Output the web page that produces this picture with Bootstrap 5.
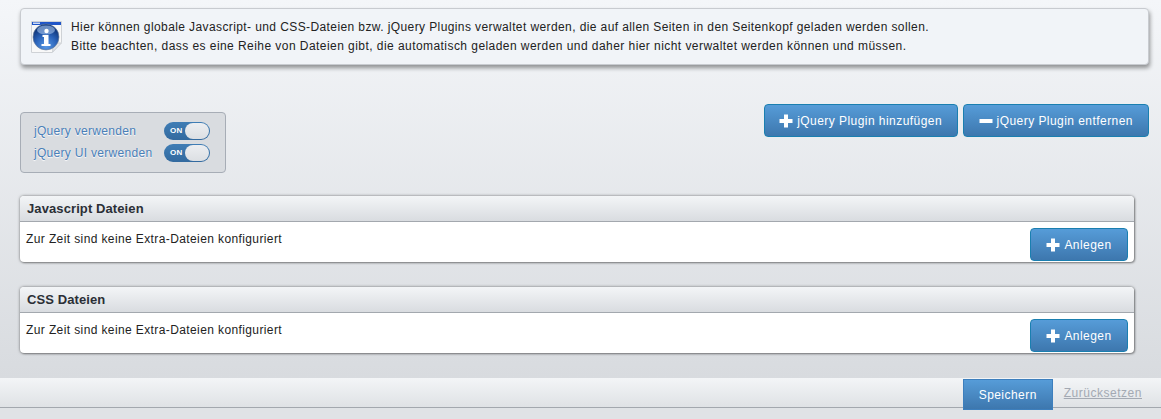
<!DOCTYPE html>
<html lang="de">
<head>
  <meta charset="UTF-8" />
  <title>Extra-Dateien</title>
  <link href="https://cdn.jsdelivr.net/npm/bootstrap@5.3.2/dist/css/bootstrap.min.css" rel="stylesheet" />
  <style>
    html, body { height: 100%; }
    body {
      margin: 0;
      height: 419px;
      overflow: hidden;
      font-family: "Liberation Sans", Arial, sans-serif;
      font-size: 12px;
      color: #222;
      background: linear-gradient(#f4f6f9, #d8dbdf) 0 0 / 100% 378px no-repeat, #e0e3e6;
    }
    .page-wrap { padding: 8px 12px 0 20px; }
    .info-box {
      height: 57px;
      gap: 9px;
      padding: 0 12px 0 10px;
      background: #f1f4f8;
      border: 1px solid #c8cbd0;
      border-radius: 4px;
      box-shadow: 1px 3px 4px rgba(0,0,0,.4);
      line-height: 19px;
    }
    .info-pic { margin-top: 1px; }
    .info-first { letter-spacing: .4px; }
    .info-second { letter-spacing: .445px; }
    .tools-row { margin-top: 39px; height: 69px; }
    .toggle-box {
      margin-top: 8px;
      width: 206px;
      height: 61px;
      padding: 7px 15px 0 13px;
      background: #d9dce0;
      border: 1px solid #a7adb6;
      border-radius: 4px;
      color: #4a7fb8;
      letter-spacing: .3px;
      text-shadow: 0 1px 1px #fff;
    }
    .toggle-line { height: 22px; }
    .on-switch {
      width: 46px;
      height: 18px;
      padding-left: 6px;
      background: linear-gradient(#3f7db5, #336a9f);
      border-radius: 9px;
      font-size: 8px;
      font-weight: bold;
      letter-spacing: .04em;
      color: #fff;
      text-shadow: none;
    }
    .on-knob {
      right: 1px;
      top: 1px;
      width: 24px;
      height: 16px;
      background: linear-gradient(#eceef1, #dcdfe3);
      border-radius: 8px;
    }
    .btn-pair { gap: 5px; }
    .blue-btn {
      height: 33px;
      gap: 4px;
      padding: 0 14.5px;
      font-size: 12px;
      letter-spacing: .45px;
      color: #fff;
      background: linear-gradient(#569cd8, #3d77ae);
      border: 1px solid #1a7fb0;
      border-radius: 4px;
    }
    .blue-btn:hover { color: #fff; background: linear-gradient(#569cd8, #3d77ae); border-color: #1a7fb0; }
    .blue-btn svg { flex: none; }
    .blue-btn.minus-btn { padding: 0 15px; }
    .file-panel {
      width: 1114px;
      height: 66px;
      margin-top: 25px;
      background: #fff;
      border: 0;
      border-radius: 4px;
      box-shadow: 0 0 3px rgba(0,0,0,.5), 1px 1px 2px rgba(0,0,0,.3);
      overflow: hidden;
    }
    .file-panel.first-panel { margin-top: 23px; }
    .file-panel .card-header {
      flex: none;
      height: 26px;
      padding: 0 7px;
      background: linear-gradient(#f3f5f7, #d9dce0);
      border-bottom: 1px solid #a3a8ae;
      border-radius: 0;
      font-size: 13px;
      font-weight: bold;
      letter-spacing: .1px;
      line-height: 26px;
      color: #2b2f36;
    }
    .file-panel .card-body {
      padding: 6px 6px 0;
      letter-spacing: .39px;
      line-height: 22px;
      color: #222;
    }
    .panel-add { width: 98px; padding: 0; justify-content: center; }
    .foot-bar {
      margin-top: 25px;
      height: 30px;
      padding-right: 19px;
      background: linear-gradient(#f3f5f7, #dfe2e5);
      border-bottom: 1px solid #a3a8ae;
    }
    .save-btn {
      height: 31px;
      width: 90px;
      margin-top: 1px;
      margin-right: 11px;
      padding: 0;
      border-radius: 0;
      justify-content: center;
      border-color: #3d7fbd;
    }
    .save-btn:hover { border-color: #3d7fbd; }
    .reset-link {
      color: #a3a9b3;
      letter-spacing: .52px;
    }
    .reset-link:hover { color: #a3a9b3; }
  </style>
</head>
<body>
  <div class="page-wrap">
    <div class="info-box d-flex align-items-center">
      <svg width="31" height="32" viewBox="0 0 31 32" class="info-pic flex-shrink-0">
        <defs>
          <radialGradient id="infoBall" cx="50%" cy="85%" r="70%">
            <stop offset="0" stop-color="#5a9ae6" />
            <stop offset=".6" stop-color="#2a62b8" />
            <stop offset="1" stop-color="#123a80" />
          </radialGradient>
        </defs>
        <path d="M.5.5h30v21l-9 10H.5z" fill="#f8f8f8" stroke="#cfd2d6" />
        <path d="M21.500 31l1-9h8z" fill="#e4e5e7" stroke="#cfd2d6" />
        <rect x="1" y="1" width="29" height="3" fill="#1f55c8" />
        <rect x="2" y="1.500" width="7" height="1.500" fill="#cfdcf5" />
        <circle cx="15" cy="16" r="13" fill="url(#infoBall)" stroke="#6f7f95" stroke-width=".6" />
        <ellipse cx="15" cy="9" rx="9" ry="4.500" fill="#a9c6ee" opacity=".6" />
        <circle cx="15.500" cy="10" r="2.200" fill="#fff" />
        <path d="M11.500 14h6v9h2v2h-9v-2h2.500v-7h-1.500z" fill="#fff" />
      </svg>
      <div>
        <div class="info-first">Hier können globale Javascript- und CSS-Dateien bzw. jQuery Plugins verwaltet werden, die auf allen Seiten in den Seitenkopf geladen werden sollen.</div>
        <div class="info-second">Bitte beachten, dass es eine Reihe von Dateien gibt, die automatisch geladen werden und daher hier nicht verwaltet werden können und müssen.</div>
      </div>
    </div>

    <div class="tools-row d-flex justify-content-between align-items-start">
      <div class="toggle-box">
        <div class="toggle-line d-flex justify-content-between align-items-center">
          <span>jQuery verwenden</span>
          <span class="on-switch d-flex align-items-center position-relative">ON<span class="on-knob position-absolute"></span></span>
        </div>
        <div class="toggle-line d-flex justify-content-between align-items-center">
          <span>jQuery UI verwenden</span>
          <span class="on-switch d-flex align-items-center position-relative">ON<span class="on-knob position-absolute"></span></span>
        </div>
      </div>
      <div class="btn-pair d-flex">
        <button type="button" class="btn blue-btn d-flex align-items-center">
          <svg width="14" height="14" viewBox="0 0 14 14"><path d="M5 .5h4V5h4.500v4H9v4.500H5V9H.5V5H5z" fill="#fff" /></svg>
          jQuery Plugin hinzufügen
        </button>
        <button type="button" class="btn blue-btn minus-btn d-flex align-items-center">
          <svg width="14" height="14" viewBox="0 0 14 14"><rect x=".5" y="5" width="13" height="4" fill="#fff" /></svg>
          jQuery Plugin entfernen
        </button>
      </div>
    </div>

    <div class="card file-panel first-panel">
      <div class="card-header">Javascript Dateien</div>
      <div class="card-body d-flex justify-content-between align-items-start">
        <span>Zur Zeit sind keine Extra-Dateien konfiguriert</span>
        <button type="button" class="btn blue-btn panel-add d-flex align-items-center">
          <svg width="14" height="14" viewBox="0 0 14 14"><path d="M5 .5h4V5h4.500v4H9v4.500H5V9H.5V5H5z" fill="#fff" /></svg>
          Anlegen
        </button>
      </div>
    </div>

    <div class="card file-panel">
      <div class="card-header">CSS Dateien</div>
      <div class="card-body d-flex justify-content-between align-items-start">
        <span>Zur Zeit sind keine Extra-Dateien konfiguriert</span>
        <button type="button" class="btn blue-btn panel-add d-flex align-items-center">
          <svg width="14" height="14" viewBox="0 0 14 14"><path d="M5 .5h4V5h4.500v4H9v4.500H5V9H.5V5H5z" fill="#fff" /></svg>
          Anlegen
        </button>
      </div>
    </div>
  </div>

  <div class="foot-bar d-flex justify-content-end align-items-start">
    <button type="button" class="btn blue-btn save-btn d-flex align-items-center">Speichern</button>
    <a href="#" class="reset-link align-self-center">Zurücksetzen</a>
  </div>

  <script src="https://cdn.jsdelivr.net/npm/bootstrap@5.3.2/dist/js/bootstrap.bundle.min.js"></script>
</body>
</html>
